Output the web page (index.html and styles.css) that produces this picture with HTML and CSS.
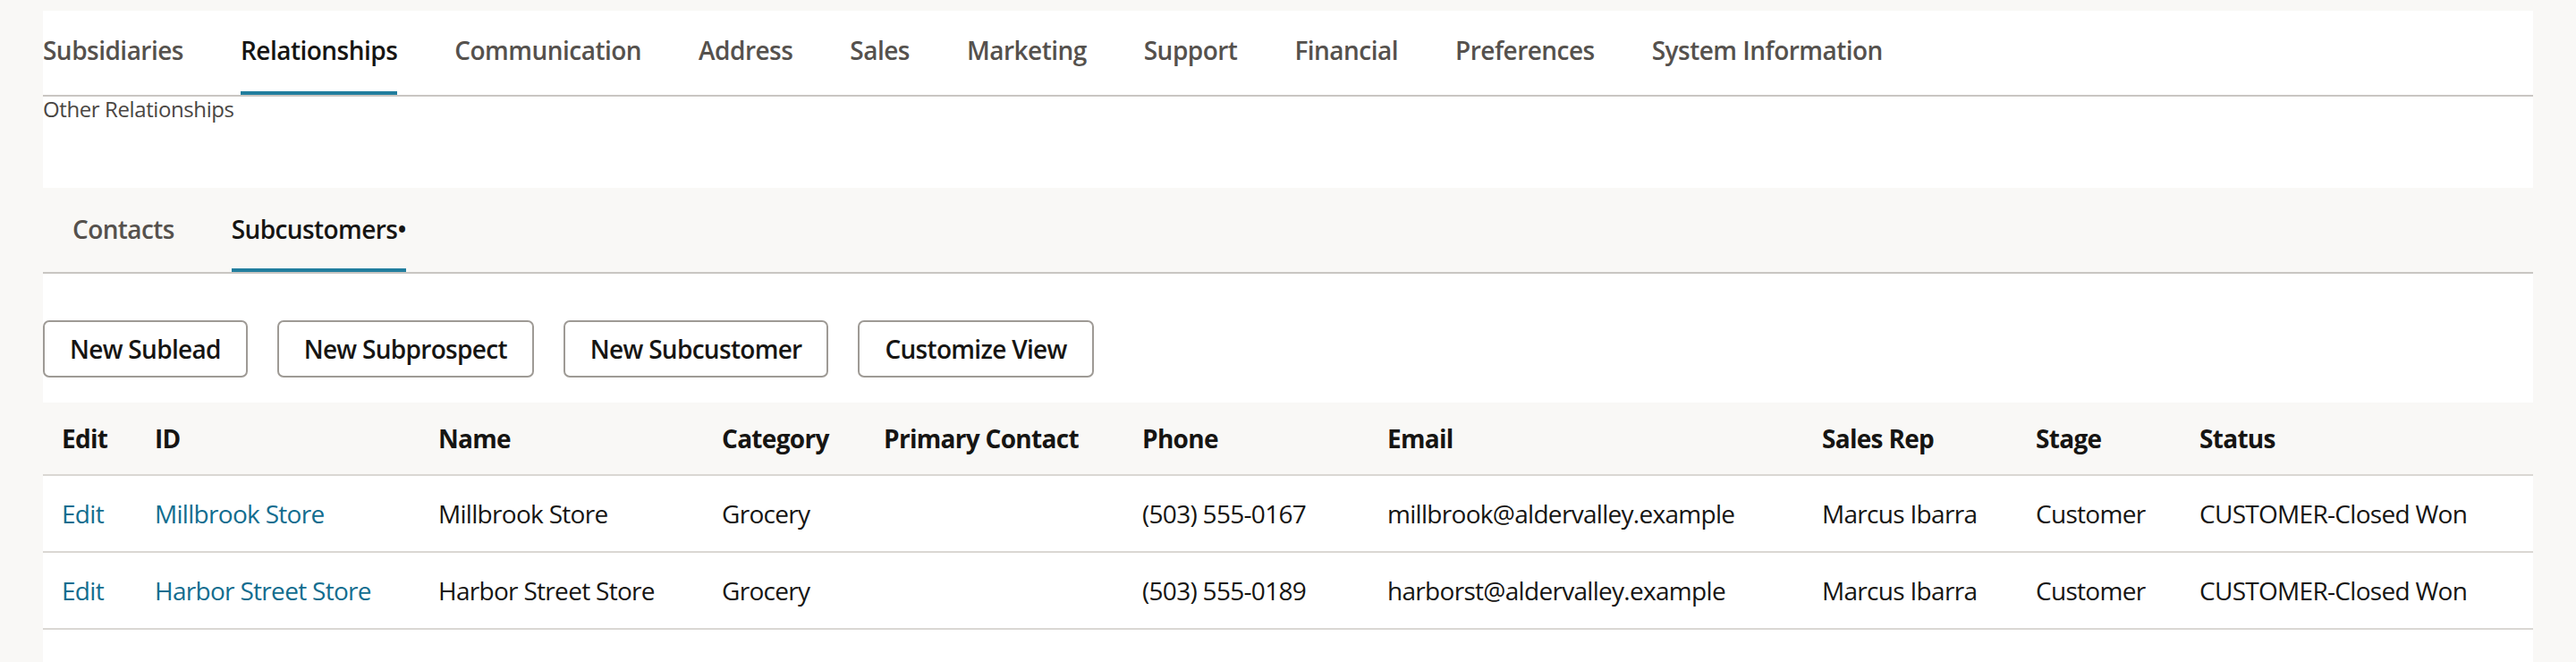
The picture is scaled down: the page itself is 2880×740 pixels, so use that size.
FILE: index.html
```html
<!DOCTYPE html>
<html lang="en">
<head>
<meta charset="utf-8">
<title>Relationships - Subcustomers</title>
<link rel="stylesheet" href="styles.css">
</head>
<body>
<div class="page">
  <div class="panel">
    <nav class="tabs">
      <span class="tab">Subsidiaries</span>
      <span class="tab active">Relationships</span>
      <span class="tab">Communication</span>
      <span class="tab">Address</span>
      <span class="tab">Sales</span>
      <span class="tab">Marketing</span>
      <span class="tab">Support</span>
      <span class="tab">Financial</span>
      <span class="tab">Preferences</span>
      <span class="tab">System Information</span>
    </nav>
    <div class="section-label">Other Relationships</div>
    <div class="spacer"></div>
    <nav class="subtabs">
      <span class="subtab">Contacts</span>
      <span class="subtab active">Subcustomers•</span>
    </nav>
    <div class="actions">
      <button class="btn">New Sublead</button>
      <button class="btn">New Subprospect</button>
      <button class="btn">New Subcustomer</button>
      <button class="btn">Customize View</button>
    </div>
    <table class="grid">
      <colgroup>
        <col class="w-edit"><col class="w-id"><col class="w-name"><col class="w-cat"><col class="w-contact">
        <col class="w-phone"><col class="w-email"><col class="w-rep"><col class="w-stage"><col class="w-status">
      </colgroup>
      <thead>
        <tr>
          <th>Edit</th><th>ID</th><th>Name</th><th>Category</th><th>Primary Contact</th>
          <th>Phone</th><th>Email</th><th>Sales Rep</th><th>Stage</th><th>Status</th>
        </tr>
      </thead>
      <tbody>
        <tr>
          <td><a class="link" href="#">Edit</a></td>
          <td><a class="link" href="#">Millbrook Store</a></td>
          <td>Millbrook Store</td>
          <td>Grocery</td>
          <td></td>
          <td>(503) 555-0167</td>
          <td>millbrook@aldervalley.example</td>
          <td>Marcus Ibarra</td>
          <td>Customer</td>
          <td>CUSTOMER-Closed Won</td>
        </tr>
        <tr>
          <td><a class="link" href="#">Edit</a></td>
          <td><a class="link" href="#">Harbor Street Store</a></td>
          <td>Harbor Street Store</td>
          <td>Grocery</td>
          <td></td>
          <td>(503) 555-0189</td>
          <td>harborst@aldervalley.example</td>
          <td>Marcus Ibarra</td>
          <td>Customer</td>
          <td>CUSTOMER-Closed Won</td>
        </tr>
      </tbody>
    </table>
  </div>
</div>
</body>
</html>
```

FILE: styles.css
```css
html, body {
  margin: 0;
  padding: 0;
}

body {
  background: #f9f8f6;
  font-family: "Open Sans", "Noto Sans", sans-serif;
  color: #161513;
  height: 740px;
  overflow: hidden;
}

.page {
  padding: 12px 48px 0 48px;
}

.panel {
  background: #ffffff;
  min-height: 728px;
}

.tabs {
  display: flex;
  gap: 64px;
  border-bottom: 2px solid #c9c6c2;
}

.tab {
  font-size: 28px;
  line-height: 38px;
  font-weight: 600;
  letter-spacing: -0.52px;
  color: #55514d;
  padding: 25px 0 27px;
  border-bottom: 4px solid transparent;
}

.tab.active {
  color: #161513;
  border-bottom-color: #227e9e;
}

.section-label {
  font-size: 24px;
  line-height: 28px;
  letter-spacing: -0.4px;
  color: #4a4643;
}

.spacer {
  height: 74px;
}

.subtabs {
  display: flex;
  gap: 64px;
  background: #f9f8f6;
  padding-left: 33px;
  border-bottom: 2px solid #c9c6c2;
}

.subtab {
  font-size: 28px;
  line-height: 38px;
  font-weight: 600;
  letter-spacing: -0.6px;
  color: #55514d;
  padding: 27px 0 25px;
  border-bottom: 4px solid transparent;
}

.subtab.active {
  color: #161513;
  border-bottom-color: #227e9e;
}

.actions {
  display: flex;
  gap: 33px;
  padding: 52px 0 28px;
}

.btn {
  height: 64px;
  padding: 0 28px;
  border: 2px solid #9e9a95;
  border-radius: 7px;
  background: #ffffff;
  font-family: "Open Sans", "Noto Sans", sans-serif;
  font-size: 28px;
  font-weight: 600;
  letter-spacing: -0.7px;
  color: #161513;
}

.grid {
  width: 100%;
  table-layout: fixed;
  border-collapse: collapse;
}

.w-edit { width: 104px; }
.w-id { width: 317px; }
.w-name { width: 317px; }
.w-cat { width: 181px; }
.w-contact { width: 289px; }
.w-phone { width: 274px; }
.w-email { width: 486px; }
.w-rep { width: 239px; }
.w-stage { width: 183px; }
.w-status { width: 394px; }

.grid th,
.grid td {
  font-size: 28px;
  letter-spacing: -0.7px;
  text-align: left;
  padding: 0 0 0 21px;
  white-space: nowrap;
  overflow: hidden;
  border-bottom: 2px solid #dad7d3;
}

.grid th {
  height: 80px;
  background: #f9f8f6;
  font-weight: 700;
  color: #161513;
}

.grid td {
  height: 84px;
  font-weight: 400;
  color: #161513;
}

.link {
  color: #126d8f;
  text-decoration: none;
}
```
